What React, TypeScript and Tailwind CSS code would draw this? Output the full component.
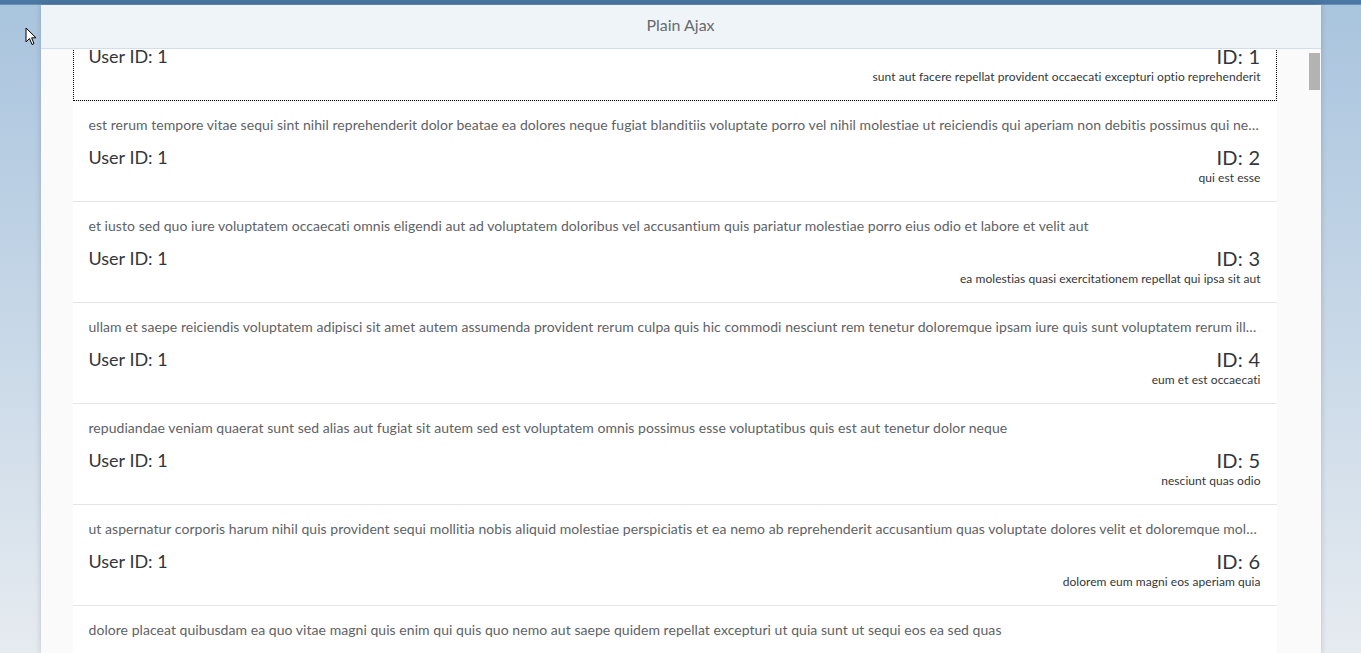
const posts = [
  {
    userId: 1,
    id: 1,
    title: "sunt aut facere repellat provident occaecati excepturi optio reprehenderit",
    body: "quia et suscipit suscipit recusandae consequuntur expedita et cum reprehenderit molestiae ut ut quas totam nostrum rerum est autem sunt rem eveniet architecto",
  },
  {
    userId: 1,
    id: 2,
    title: "qui est esse",
    body: "est rerum tempore vitae sequi sint nihil reprehenderit dolor beatae ea dolores neque fugiat blanditiis voluptate porro vel nihil molestiae ut reiciendis qui aperiam non debitis possimus qui neque nisi nulla",
  },
  {
    userId: 1,
    id: 3,
    title: "ea molestias quasi exercitationem repellat qui ipsa sit aut",
    body: "et iusto sed quo iure voluptatem occaecati omnis eligendi aut ad voluptatem doloribus vel accusantium quis pariatur molestiae porro eius odio et labore et velit aut",
  },
  {
    userId: 1,
    id: 4,
    title: "eum et est occaecati",
    body: "ullam et saepe reiciendis voluptatem adipisci sit amet autem assumenda provident rerum culpa quis hic commodi nesciunt rem tenetur doloremque ipsam iure quis sunt voluptatem rerum illo velit",
  },
  {
    userId: 1,
    id: 5,
    title: "nesciunt quas odio",
    body: "repudiandae veniam quaerat sunt sed alias aut fugiat sit autem sed est voluptatem omnis possimus esse voluptatibus quis est aut tenetur dolor neque",
  },
  {
    userId: 1,
    id: 6,
    title: "dolorem eum magni eos aperiam quia",
    body: "ut aspernatur corporis harum nihil quis provident sequi mollitia nobis aliquid molestiae perspiciatis et ea nemo ab reprehenderit accusantium quas voluptate dolores velit et doloremque molestiae",
  },
  {
    userId: 1,
    id: 7,
    title: "magnam facilis autem",
    body: "dolore placeat quibusdam ea quo vitae magni quis enim qui quis quo nemo aut saepe quidem repellat excepturi ut quia sunt ut sequi eos ea sed quas",
  },
];

type Post = (typeof posts)[number];

const PostItem = ({ post, focused }: { post: Post; focused?: boolean }) => (
  <li
    className={
      "bg-white px-4 pt-[15px] pb-[15px] border-b border-[#e5e5e5] " +
      (focused ? "outline outline-1 outline-dotted outline-black -outline-offset-1" : "")
    }
  >
    <p className="truncate text-[14px] leading-[18px] tracking-[0.05px] text-[#5e6266]">{post.body}</p>
    <div className="mt-[11px] flex items-start justify-between">
      <span className="text-[18px] leading-[24px] text-[#32363a]">User ID: {post.userId}</span>
      <div className="-mt-px flex flex-col items-end">
        <span className="text-[20px] leading-[26px] tracking-[0.3px] text-[#32363a]">ID: {post.id}</span>
        <span className="text-[12px] leading-[16px] tracking-[0.05px] text-[#32363a]">{post.title}</span>
      </div>
    </div>
  </li>
);

export default function App() {
  return (
    <div
      className="relative flex h-[653px] w-full flex-col overflow-hidden bg-gradient-to-b from-[#a9c4de] to-[#e6ebf0] [font-variant-ligatures:none]"
      style={{ fontFamily: "Lato, 'Open Sans', sans-serif" }}
    >
      <div className="h-[5px] shrink-0 border-b border-[#6a90b5] bg-[#4a77a3]" />

      <div className="flex min-h-0 flex-1 justify-center">
        <div className="flex w-[1280px] flex-col bg-[#fafafa] shadow-[0_0_6px_rgba(0,0,0,0.18)]">
          <header className="relative z-10 flex h-[44px] shrink-0 items-center justify-center border-b border-[#d1dde8] bg-[#eff4f9] pb-[4px]">
            <span className="text-[16px] text-[#666a6e]">Plain Ajax</span>
          </header>

          <div className="flex min-h-0 flex-1">
            <div className="min-w-0 flex-1 overflow-hidden px-8">
              <ul className="mt-[-49px]">
                {posts.map((p, i) => (
                  <PostItem key={p.id} post={p} focused={i === 0} />
                ))}
              </ul>
            </div>
            <div className="w-[12px] shrink-0 pt-[4px]">
              <div className="h-[37px] w-[11px] bg-[#b3b3b3]" />
            </div>
          </div>
        </div>
      </div>

      {/* mouse pointer from the screenshot */}
      <svg className="absolute left-[25px] top-[27px]" width="12" height="19" viewBox="0 0 12 19">
        <path d="M1 1 L1 15 L4.5 11.5 L7 17.5 L9 16.6 L6.6 10.8 L11 10.8 Z" fill="white" stroke="black" strokeWidth="1" strokeLinejoin="round" />
      </svg>
    </div>
  );
}
